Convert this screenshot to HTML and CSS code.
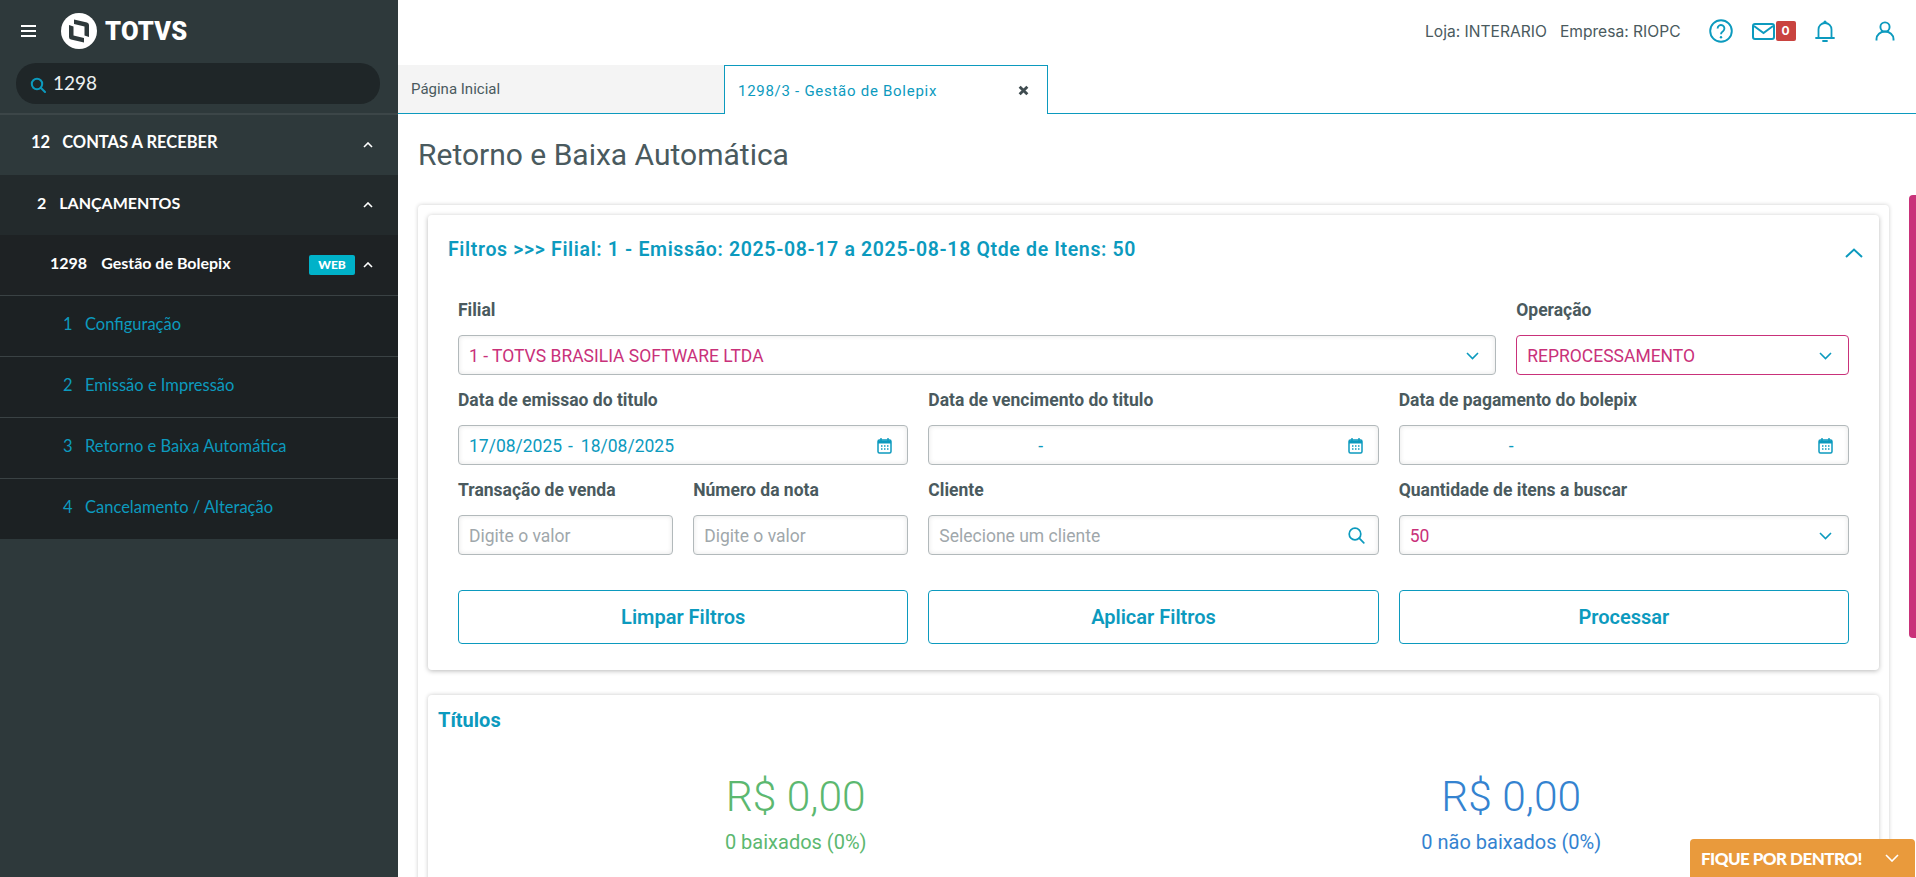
FILE: index.html
```html
<!DOCTYPE html>
<html lang="pt-BR">
<head>
  <meta charset="UTF-8" />
  <meta name="viewport" content="width=device-width, initial-scale=1" />
  <title>Retorno e Baixa Automática - TOTVS</title>
  <link rel="stylesheet" href="styles.css">
</head>
<body>

<aside class="sidebar">
  <div class="brand">
    <div class="hamburger"><span></span><span></span><span></span></div>
    <svg class="logo" viewBox="0 0 36 36">
      <circle cx="18" cy="18" r="18" fill="#fff"/>
      <path d="M8 12V24Q8 26 10 26.6L23 29.5V25L12.5 22.5V13.5Z" fill="#2e393b"/>
      <path d="M28 24V12Q28 10 26 9.4L13 6.5V11L23.5 13.5V22.5Z" fill="#2e393b"/>
    </svg>
    <span class="brand-name">TOTVS</span>
  </div>
  <div class="search">
    <svg class="search-icon" viewBox="0 0 16 16"><circle cx="7" cy="7" r="5.2" fill="none" stroke="#0c9abe" stroke-width="2"/><path d="M11 11l4 4" stroke="#0c9abe" stroke-width="2" stroke-linecap="round"/></svg>
    <span>1298</span>
  </div>

  <nav class="menu">
    <div class="menu-row level-1">
      <span class="num">12</span><span class="label">CONTAS A RECEBER</span>
      <svg class="caret" viewBox="0 0 10 6"><path d="M1 5l4-4 4 4" fill="none" stroke="#fff" stroke-width="1.6"/></svg>
    </div>
    <div class="menu-row level-2">
      <span class="num">2</span><span class="label">LANÇAMENTOS</span>
      <svg class="caret" viewBox="0 0 10 6"><path d="M1 5l4-4 4 4" fill="none" stroke="#fff" stroke-width="1.6"/></svg>
    </div>
    <div class="menu-row level-3">
      <span class="num">1298</span><span class="label">Gestão de Bolepix</span>
      <span class="web-tag">WEB</span>
      <svg class="caret" viewBox="0 0 10 6"><path d="M1 5l4-4 4 4" fill="none" stroke="#fff" stroke-width="1.6"/></svg>
    </div>
    <div class="menu-row leaf"><span class="num">1</span><span class="label">Configuração</span></div>
    <div class="menu-row leaf"><span class="num">2</span><span class="label">Emissão e Impressão</span></div>
    <div class="menu-row leaf"><span class="num">3</span><span class="label">Retorno e Baixa Automática</span></div>
    <div class="menu-row leaf"><span class="num">4</span><span class="label">Cancelamento / Alteração</span></div>
  </nav>
</aside>

<main class="main">
  <header class="topbar">
    <span class="store">Loja: INTERARIO</span>
    <span class="company">Empresa: RIOPC</span>
    <svg class="icon-help" viewBox="0 0 24 24">
      <circle cx="12" cy="12" r="10.8" fill="none" stroke="#0c9abe" stroke-width="1.9"/>
      <path d="M8.6 9.4a3.4 3.4 0 1 1 5.4 2.8c-1.2.8-2 1.5-2 3" fill="none" stroke="#0c9abe" stroke-width="1.9"/>
      <circle cx="12" cy="18.2" r="1.2" fill="#0c9abe"/>
    </svg>
    <div class="mail">
      <svg class="icon-mail" viewBox="0 0 23 17">
        <rect x="1" y="1" width="21" height="15" rx="2" fill="none" stroke="#0c9abe" stroke-width="2"/>
        <path d="M2 3l9.5 7L21 3" fill="none" stroke="#0c9abe" stroke-width="2"/>
      </svg>
      <span class="mail-count">0</span>
    </div>
    <svg class="icon-bell" viewBox="0 0 20 22">
      <path d="M3.5 17.5V9.5a6.5 6.5 0 0 1 13 0v8" fill="none" stroke="#0c9abe" stroke-width="1.8"/>
      <path d="M1 18h18" stroke="#0c9abe" stroke-width="1.8" stroke-linecap="round"/>
      <circle cx="10" cy="2.2" r="1.6" fill="#0c9abe"/>
      <path d="M8 21h4" stroke="#0c9abe" stroke-width="1.8" stroke-linecap="round"/>
    </svg>
    <svg class="icon-user" viewBox="0 0 20 20">
      <circle cx="10" cy="6" r="4.6" fill="none" stroke="#0c9abe" stroke-width="1.9"/>
      <path d="M1.5 19.5v-1.5a8.5 7.5 0 0 1 17 0v1.5" fill="none" stroke="#0c9abe" stroke-width="1.9"/>
    </svg>
  </header>

  <div class="tabs">
    <div class="tab tab-home">Página Inicial</div>
    <div class="tab tab-active">
      <span>1298/3 - Gestão de Bolepix</span>
      <svg class="tab-close" viewBox="0 0 10 10"><path d="M1.5 1.5l7 7M8.5 1.5l-7 7" stroke="#3f4c50" stroke-width="2.6"/></svg>
    </div>
    <div class="tab-rest"></div>
  </div>

  <section class="content">
    <h1 class="page-title">Retorno e Baixa Automática</h1>

    <div class="outer-card">
      <div class="card filter-card">
        <div class="filter-head">
          <h2>Filtros &gt;&gt;&gt; Filial: 1 - Emissão: 2025-08-17 a 2025-08-18 Qtde de Itens: 50</h2>
          <svg class="filter-toggle" viewBox="0 0 18 10"><path d="M1 9l8-7.5L17 9" fill="none" stroke="#0c9abe" stroke-width="2"/></svg>
        </div>

        <div class="form-grid">
          <div class="field span-9">
            <label>Filial</label>
            <div class="input select-value">1 - TOTVS BRASILIA SOFTWARE LTDA
              <svg class="chevron" viewBox="0 0 13 8"><path d="M1 1l5.5 5.5L12 1" fill="none" stroke="#0c9abe" stroke-width="1.6"/></svg>
            </div>
          </div>
          <div class="field span-3">
            <label>Operação</label>
            <div class="input select-value is-active">REPROCESSAMENTO
              <svg class="chevron" viewBox="0 0 13 8"><path d="M1 1l5.5 5.5L12 1" fill="none" stroke="#0c9abe" stroke-width="1.6"/></svg>
            </div>
          </div>

          <div class="field span-4">
            <label>Data de emissao do titulo</label>
            <div class="input date-value">
              <span class="date-start">17/08/2025</span><span>-</span><span class="date-end">18/08/2025</span>
              <svg class="calendar" viewBox="0 0 15 17"><rect x="1" y="3" width="13" height="13" rx="1.5" fill="none" stroke="#0c9abe" stroke-width="1.5"/><path d="M1 3.5h13v3H1z" fill="#0c9abe"/><path d="M4 1v3M11 1v3" stroke="#0c9abe" stroke-width="1.4"/><path d="M4 9h1.5M7 9h1.5M10 9h1.5M4 12h1.5M7 12h1.5M10 12h1.5" stroke="#0c9abe" stroke-width="1.3"/></svg>
            </div>
          </div>
          <div class="field span-4">
            <label>Data de vencimento do titulo</label>
            <div class="input date-value">
              <span class="date-start"></span><span>-</span>
              <svg class="calendar" viewBox="0 0 15 17"><rect x="1" y="3" width="13" height="13" rx="1.5" fill="none" stroke="#0c9abe" stroke-width="1.5"/><path d="M1 3.5h13v3H1z" fill="#0c9abe"/><path d="M4 1v3M11 1v3" stroke="#0c9abe" stroke-width="1.4"/><path d="M4 9h1.5M7 9h1.5M10 9h1.5M4 12h1.5M7 12h1.5M10 12h1.5" stroke="#0c9abe" stroke-width="1.3"/></svg>
            </div>
          </div>
          <div class="field span-4">
            <label>Data de pagamento do bolepix</label>
            <div class="input date-value">
              <span class="date-start"></span><span>-</span>
              <svg class="calendar" viewBox="0 0 15 17"><rect x="1" y="3" width="13" height="13" rx="1.5" fill="none" stroke="#0c9abe" stroke-width="1.5"/><path d="M1 3.5h13v3H1z" fill="#0c9abe"/><path d="M4 1v3M11 1v3" stroke="#0c9abe" stroke-width="1.4"/><path d="M4 9h1.5M7 9h1.5M10 9h1.5M4 12h1.5M7 12h1.5M10 12h1.5" stroke="#0c9abe" stroke-width="1.3"/></svg>
            </div>
          </div>

          <div class="field span-2">
            <label>Transação de venda</label>
            <div class="input placeholder">Digite o valor</div>
          </div>
          <div class="field span-2">
            <label>Número da nota</label>
            <div class="input placeholder">Digite o valor</div>
          </div>
          <div class="field span-4">
            <label>Cliente</label>
            <div class="input placeholder">Selecione um cliente
              <svg class="lookup" viewBox="0 0 17 17"><circle cx="7" cy="7" r="5.8" fill="none" stroke="#0c9abe" stroke-width="1.7"/><path d="M11.2 11.2l4.6 4.6" stroke="#0c9abe" stroke-width="1.7" stroke-linecap="round"/></svg>
            </div>
          </div>
          <div class="field span-4">
            <label>Quantidade de itens a buscar</label>
            <div class="input select-value">50
              <svg class="chevron" viewBox="0 0 13 8"><path d="M1 1l5.5 5.5L12 1" fill="none" stroke="#0c9abe" stroke-width="1.6"/></svg>
            </div>
          </div>

          <button class="btn span-4">Limpar Filtros</button>
          <button class="btn span-4">Aplicar Filtros</button>
          <button class="btn span-4">Processar</button>
        </div>
      </div>

      <div class="card totals-card">
        <h2>Títulos</h2>
        <div class="totals">
          <div class="total is-paid">
            <div class="amount">R$ 0,00</div>
            <div class="count">0 baixados (0%)</div>
          </div>
          <div class="total is-open">
            <div class="amount">R$ 0,00</div>
            <div class="count">0 não baixados (0%)</div>
          </div>
        </div>
      </div>
    </div>

    <div class="scroll-thumb"></div>
  </section>
</main>

<div class="news-widget">
  <span>FIQUE POR DENTRO!</span>
  <svg viewBox="0 0 14 8"><path d="M1 1l6 6 6-6" fill="none" stroke="#fff" stroke-width="1.6"/></svg>
</div>

</body>
</html>
```

FILE: styles.css
```css
* {
  box-sizing: border-box;
}
html, body {
  height: 100%;
  overflow: hidden;
}
body {
  margin: 0;
  display: flex;
  background: white;
  font-family: Roboto, Arial, sans-serif;
  color: #4a5a5e;
}

/* sidebar */
.sidebar {
  width: 398px;
  flex-shrink: 0;
  background: #2e393b;
  font-family: Lato, Arial, sans-serif;
  color: white;
}
.brand {
  height: 63px;
  display: flex;
  align-items: center;
  padding-left: 21px;
  padding-bottom: 1px;
}
.hamburger {
  width: 15px;
  display: flex;
  flex-direction: column;
  gap: 3px;
  margin-right: 25px;
}
.hamburger span {
  height: 2px;
  background: white;
}
.logo {
  width: 36px;
  height: 36px;
  margin-right: 8px;
}
.brand-name {
  font-family: Roboto, Arial, sans-serif;
  font-size: 25.5px;
  font-weight: 900;
  letter-spacing: 0.2px;
}
.search {
  height: 41px;
  margin: 0 18px 0 16px;
  padding: 0 0 3px 14px;
  display: flex;
  align-items: center;
  gap: 7px;
  background: #1f2628;
  border-radius: 20px;
  font-size: 19px;
  color: #eef1f1;
}
.search-icon {
  width: 16px;
  height: 16px;
  margin-top: 6px;
}
.menu {
  margin-top: 9px;
  border-top: 2px solid #3c4648;
}
.menu-row {
  height: 60px;
  padding-bottom: 6px;
  display: flex;
  align-items: center;
  font-weight: 700;
  font-size: 16px;
}
.caret {
  width: 10px;
  height: 6px;
  margin-left: auto;
  margin-right: 25px;
  margin-top: 6px;
}
.level-1 {
  padding-left: 31px;
  background: #2e393b;
  font-size: 16.5px;
}
.level-1 .num {
  margin-right: 12px;
}
.level-2 {
  padding-left: 37px;
  background: #232a2c;
}
.level-2 .num {
  margin-right: 13px;
}
.level-3 {
  padding-left: 50px;
  background: #1e2224;
}
.level-3 .num {
  margin-right: 14px;
}
.level-3 .caret {
  margin-left: 8px;
}
.web-tag {
  margin-left: auto;
  margin-top: 6px;
  width: 46px;
  height: 20px;
  line-height: 20px;
  text-align: center;
  font-size: 12px;
  font-weight: 900;
  background: #00b2c9;
  border-radius: 2px;
}
.leaf {
  height: 61px;
  padding-left: 63px;
  padding-bottom: 4px;
  background: #1c2123;
  border-top: 1px solid #3a4244;
  color: #0c9abe;
  font-weight: 400;
  font-size: 16.5px;
}
.leaf .num {
  width: 22px;
}

/* main area */
.main {
  flex: 1;
  min-width: 0;
  display: flex;
  flex-direction: column;
}
.topbar {
  height: 65px;
  flex-shrink: 0;
  display: flex;
  align-items: center;
  padding-left: 1027px;
  padding-bottom: 3px;
  font-family: Inter, Roboto, Arial, sans-serif;
  font-size: 15.6px;
  color: #4a5a5e;
}
.store {
  margin-right: 13px;
}
.company {
  margin-right: 28px;
}
.icon-help {
  width: 24px;
  height: 24px;
  margin-right: 19px;
}
.mail {
  display: flex;
  align-items: center;
  margin-right: 19px;
}
.icon-mail {
  width: 23px;
  height: 17px;
}
.mail-count {
  width: 20px;
  height: 20px;
  margin-left: 1px;
  background: #c9433f;
  border-radius: 2px;
  color: white;
  font-size: 12px;
  font-weight: 700;
  line-height: 20px;
  text-align: center;
}
.icon-bell {
  width: 20px;
  height: 22px;
  margin-right: 40px;
}
.icon-user {
  width: 20px;
  height: 20px;
}

.tabs {
  height: 49px;
  flex-shrink: 0;
  display: flex;
}
.tab {
  display: flex;
  align-items: center;
  font-size: 15px;
}
.tab-home {
  width: 326px;
  padding-left: 13px;
  background: #f4f4f4;
  border-bottom: 1px solid #0c9abe;
}
.tab-active {
  width: 324px;
  padding: 1px 18px 0 13px;
  justify-content: space-between;
  color: #0c9abe;
  border: 1px solid #0c9abe;
  border-bottom: none;
  letter-spacing: 0.72px;
}
.tab-close {
  width: 11px;
  height: 11px;
}
.tab-rest {
  flex: 1;
  border-bottom: 1px solid #0c9abe;
}

.content {
  flex: 1;
  min-height: 0;
  padding: 0 27px 0 20px;
  position: relative;
  overflow: hidden;
}
.page-title {
  margin: 0;
  height: 91px;
  padding-top: 21px;
  font-size: 30px;
  line-height: 40px;
  font-weight: 400;
  color: #4a5a5e;
}
.outer-card {
  padding: 10px;
  height: 800px;
  background: white;
  border-radius: 4px;
  box-shadow: 0 0 4px rgba(0, 0, 0, 0.2);
}
.card {
  background: white;
  border-radius: 4px;
  box-shadow: 0 1px 5px rgba(0, 0, 0, 0.28);
}
.filter-card {
  padding: 0 30px 26px;
}
.filter-head {
  height: 83px;
  display: flex;
  align-items: flex-start;
  justify-content: space-between;
  padding-top: 23px;
  margin: 0 -14px 0 -10px;
}
.filter-head h2 {
  margin: 0;
  font-size: 19.5px;
  line-height: 24px;
  font-weight: 600;
  letter-spacing: 0.65px;
  color: #0c9abe;
}
.filter-toggle {
  width: 18px;
  height: 10px;
  margin-top: 10px;
}
.form-grid {
  display: grid;
  grid-template-columns: repeat(12, 1fr);
  column-gap: 20px;
  row-gap: 13px;
}
.span-2 { grid-column: span 2; }
.span-3 { grid-column: span 3; }
.span-4 { grid-column: span 4; }
.span-9 { grid-column: span 9; }
.field label {
  display: block;
  height: 24px;
  margin-bottom: 13px;
  font-size: 17.5px;
  line-height: 24px;
  font-weight: 700;
  color: #4a5a5e;
}
.input {
  height: 40px;
  display: flex;
  align-items: center;
  padding: 1px 10px 0;
  font-size: 17.5px;
  border: 1px solid #b2b9bb;
  border-radius: 4px;
  box-shadow: inset 0 0 5px rgba(0, 0, 0, 0.1);
  background: white;
}
.select-value {
  color: #c9317a;
}
.select-value.is-active {
  border-color: #c9317a;
  box-shadow: none;
}
.date-value {
  color: #0c9abe;
}
.date-start {
  width: 99px;
}
.date-end {
  margin-left: 8px;
}
.placeholder {
  color: #a0a7ab;
}
.chevron {
  width: 13px;
  height: 8px;
  margin-left: auto;
  margin-right: 6px;
}
.calendar {
  width: 15px;
  height: 17px;
  margin-left: auto;
  margin-right: 5px;
}
.lookup {
  width: 17px;
  height: 17px;
  margin-left: auto;
  margin-right: 3px;
}
.btn {
  height: 54px;
  margin-top: 22px;
  background: white;
  border: 1px solid #0c9abe;
  border-radius: 4px;
  color: #0c9abe;
  font-family: Roboto, Arial, sans-serif;
  font-size: 20px;
  font-weight: 600;
}

.totals-card {
  margin-top: 25px;
  height: 500px;
  padding: 10px;
  box-shadow: 0 0 4px rgba(0, 0, 0, 0.22);
}
.totals-card h2 {
  margin: 0;
  font-size: 20px;
  line-height: 30px;
  font-weight: 700;
  color: #0c9abe;
}
.totals {
  display: grid;
  grid-template-columns: 1fr 1fr;
  padding-top: 35px;
  text-align: center;
}
.amount {
  font-size: 42.5px;
  line-height: 54px;
  font-weight: 300;
}
.count {
  margin-top: 4px;
  font-size: 20px;
  line-height: 28px;
}
.is-paid {
  color: #5cb870;
}
.is-open {
  color: #3483d0;
}

.scroll-thumb {
  position: absolute;
  top: 81px;
  right: 0;
  width: 7px;
  height: 443px;
  background: #c9327a;
  border-radius: 4px 0 0 4px;
}

.news-widget {
  position: fixed;
  left: 1690px;
  top: 839px;
  width: 225px;
  height: 38px;
  display: flex;
  align-items: center;
  justify-content: space-between;
  padding: 0 16px 0 11px;
  background: #e99a3c;
  border-radius: 4px 4px 0 0;
  color: white;
  font-family: Lato, Arial, sans-serif;
  font-size: 17px;
  font-weight: 900;
  letter-spacing: -0.55px;
}
.news-widget svg {
  width: 14px;
  height: 8px;
}
```
